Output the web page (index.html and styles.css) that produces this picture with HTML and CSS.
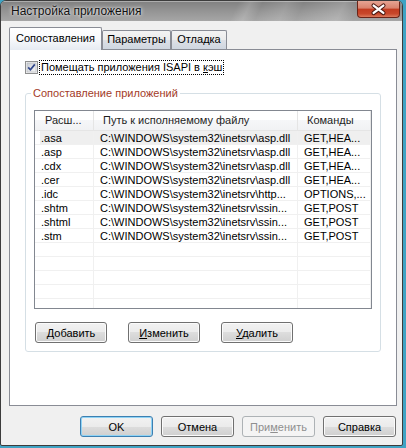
FILE: index.html
```html
<!DOCTYPE html>
<html lang="ru">
<head>
    <meta charset="UTF-8">
    <title>Настройка приложения</title>
    <link rel="stylesheet" href="styles.css">
</head>
<body>
    <div class="window">
        <!-- Заголовок окна -->
        <div class="titlebar">
            <span class="caption">Настройка приложения</span>
            <button class="close-btn" type="button" aria-label="Закрыть">
                <svg width="42" height="17" viewBox="0 0 42 17">
                    <path d="M16 4.5 L26 12 M26 4.5 L16 12" stroke="#4a1810" stroke-width="4.4" stroke-linecap="round" fill="none"/>
                    <path d="M16 4.5 L26 12 M26 4.5 L16 12" stroke="#fff" stroke-width="2.4" stroke-linecap="round" fill="none"/>
                </svg>
            </button>
        </div>

        <div class="client">
            <!-- Вкладки -->
            <div class="tabs">
                <div class="tab active">Сопоставления</div>
                <div class="tab tab-params">Параметры</div>
                <div class="tab tab-debug">Отладка</div>
            </div>

            <div class="tab-page">
                <label class="check-row">
                    <span class="checkbox">
                        <svg width="13" height="13" viewBox="0 0 13 13">
                            <defs>
                                <linearGradient id="boxFill" x1="0" y1="0" x2="1" y2="1">
                                    <stop offset="0" stop-color="#c9cdd3"/>
                                    <stop offset="1" stop-color="#f7f7f7"/>
                                </linearGradient>
                            </defs>
                            <rect x="0.5" y="0.5" width="12" height="12" fill="#f4f4f4" stroke="#8e8f8f"/>
                            <rect x="2" y="2" width="9" height="9" fill="url(#boxFill)" stroke="#aeb2b8" stroke-width="0.6"/>
                            <path d="M3.2 6.4 L5.4 8.8 L9.8 3.4" stroke="#31478b" stroke-width="1.7" fill="none"/>
                        </svg>
                    </span>
                    <span class="check-label">Помещать приложения ISAPI в <u>к</u>эш</span>
                </label>

                <fieldset class="group">
                    <legend>Сопоставление приложений</legend>

                    <div class="listview">
                        <div class="lv-header">
                            <span>Расш...</span>
                            <span>Путь к исполняемому файлу</span>
                            <span>Команды</span>
                        </div>
                        <div class="lv-row focused">
                            <span>.asa</span><span>C:\WINDOWS\system32\inetsrv\asp.dll</span><span>GET,HEA...</span>
                        </div>
                        <div class="lv-row">
                            <span>.asp</span><span>C:\WINDOWS\system32\inetsrv\asp.dll</span><span>GET,HEA...</span>
                        </div>
                        <div class="lv-row">
                            <span>.cdx</span><span>C:\WINDOWS\system32\inetsrv\asp.dll</span><span>GET,HEA...</span>
                        </div>
                        <div class="lv-row">
                            <span>.cer</span><span>C:\WINDOWS\system32\inetsrv\asp.dll</span><span>GET,HEA...</span>
                        </div>
                        <div class="lv-row">
                            <span>.idc</span><span>C:\WINDOWS\system32\inetsrv\http...</span><span>OPTIONS,...</span>
                        </div>
                        <div class="lv-row">
                            <span>.shtm</span><span>C:\WINDOWS\system32\inetsrv\ssin...</span><span>GET,POST</span>
                        </div>
                        <div class="lv-row">
                            <span>.shtml</span><span>C:\WINDOWS\system32\inetsrv\ssin...</span><span>GET,POST</span>
                        </div>
                        <div class="lv-row">
                            <span>.stm</span><span>C:\WINDOWS\system32\inetsrv\ssin...</span><span>GET,POST</span>
                        </div>
                        <!-- пустые строки с линиями сетки -->
                        <div class="lv-row"><span></span><span></span><span></span></div>
                        <div class="lv-row"><span></span><span></span><span></span></div>
                        <div class="lv-row"><span></span><span></span><span></span></div>
                        <div class="lv-row"><span></span><span></span><span></span></div>
                        <div class="lv-row"><span></span><span></span><span></span></div>
                    </div>

                    <div class="group-buttons">
                        <button class="btn" type="button"><u>Д</u>обавить</button>
                        <button class="btn" type="button"><u>И</u>зменить</button>
                        <button class="btn" type="button"><u>У</u>далить</button>
                    </div>
                </fieldset>
            </div>

            <!-- Кнопки диалога -->
            <div class="dialog-buttons">
                <button class="btn wide default" type="button">OK</button>
                <button class="btn wide" type="button">Отмена</button>
                <button class="btn wide" type="button" disabled>При<u>м</u>енить</button>
                <button class="btn wide" type="button">Справка</button>
            </div>
        </div>
    </div>
</body>
</html>
```

FILE: styles.css
```css
/* Общие стили */
* {
    box-sizing: border-box;
}

body {
    margin: 0;
    background-color: #3fa3c4;
    font-family: "Liberation Sans", Arial, sans-serif;
    font-size: 11px;
    color: #000;
}

/* Окно диалога */
.window {
    width: 403px;
    height: 446px;
    display: flex;
    flex-direction: column;
    border: 1px solid #3c3c3c;
    border-radius: 6px 6px 2px 2px;
    background-color: #f0f0f0;
    overflow: hidden;
}

/* Стеклянный заголовок */
.titlebar {
    height: 20px;
    display: flex;
    align-items: flex-start;
    background:
        linear-gradient(115deg, transparent 58%, rgba(255, 255, 255, 0.16) 61%, transparent 64%,
            rgba(255, 255, 255, 0.12) 70%, transparent 74%, rgba(255, 255, 255, 0.18) 84%, transparent 88%),
        linear-gradient(#808080, #969696 55%, #a6a6a6);
    box-shadow: inset 0 1px 0 rgba(255, 255, 255, 0.35);
}

.caption {
    padding: 3px 0 0 10px;
    font-size: 12px;
    line-height: 15px;
    color: #111;
    text-shadow: 0 0 4px rgba(255, 255, 255, 0.9), 0 0 2px rgba(255, 255, 255, 0.7);
}

.close-btn {
    margin-left: auto;
    margin-right: 2px;
    width: 43px;
    height: 17px;
    padding: 0;
    border: 1px solid #6b2418;
    border-top: none;
    border-radius: 0 0 4px 4px;
    background: linear-gradient(#e6a493, #d9826c 45%, #c23c20 50%, #c8482b 80%, #dc7a5c);
    display: flex;
}

.close-btn svg {
    display: block;
}

/* Клиентская область */
.client {
    flex: 1;
    display: flex;
    flex-direction: column;
    padding: 6px 5px 8px 8px;
}

/* Вкладки */
.tabs {
    height: 22px;
    display: flex;
    align-items: flex-end;
    position: relative;
    z-index: 1;
}

.tab {
    height: 19px;
    text-align: center;
    line-height: 17px;
    border: 1px solid #898c95;
    border-bottom: none;
    border-radius: 2px 2px 0 0;
    background: linear-gradient(#f3f3f3, #ebebeb 50%, #dde0e6 50%, #cfd6e0);
}

.tab.active {
    width: 93px;
    height: 23px;
    margin-bottom: -1px;
    line-height: 20px;
    background: linear-gradient(#ffffff, #f9fafc 45%, #e6ebf2);
}

.tab-params {
    width: 69px;
}

.tab-debug {
    width: 56px;
}

/* Страница вкладки */
.tab-page {
    flex: 1;
    width: 388px;
    border: 1px solid #898c95;
    background-color: #fff;
    padding: 10px 15px 0 15px;
}

/* Флажок */
.check-row {
    display: flex;
    align-items: center;
    height: 15px;
}

.checkbox {
    width: 13px;
    height: 13px;
    display: block;
}

.checkbox svg {
    display: block;
}

.check-label {
    margin-left: 1px;
    padding: 0 1px;
    line-height: 13px;
    border: 1px dotted #000;
}

/* Группа */
.group {
    margin: 12px 0 0 0;
    padding: 0 8px 8px 8px;
    border: 1px solid #d5dfe5;
    border-radius: 3px;
}

.group legend {
    margin-left: -3px;
    padding: 0 2px;
    line-height: 13px;
    color: #a33b28;
}

/* Список сопоставлений */
.listview {
    margin-top: 10px;
    height: 199px;
    border: 1px solid #828790;
    background-color: #fff;
    overflow: hidden;
}

.lv-header,
.lv-row {
    display: grid;
    grid-template-columns: 59px 204px 1fr;
}

.lv-header {
    height: 20px;
    background: linear-gradient(#ffffff, #ffffff 45%, #f6f7f9 45%, #f1f2f4);
    border-bottom: 1px solid #e5e5e5;
}

.lv-header span {
    padding-left: 9px;
    line-height: 19px;
    color: #1e1e1e;
    border-right: 1px solid #e5e5e5;
}

.lv-header span:first-child {
    padding-left: 10px;
}

.lv-row {
    height: 14px;
}

.lv-row span {
    padding-left: 6px;
    line-height: 14px;
    white-space: nowrap;
    overflow: hidden;
    border-right: 1px solid #f0f0f0;
    border-bottom: 1px solid #f0f0f0;
}

.lv-row.focused {
    background: linear-gradient(to right, transparent 5px, #efefef 5px);
}

/* Кнопки */
.btn {
    height: 21px;
    padding: 0;
    font-family: inherit;
    font-size: 11px;
    color: #000;
    border: 1px solid #707070;
    border-radius: 3px;
    background: linear-gradient(#f2f2f2, #ebebeb 50%, #dddddd 50%, #cfcfcf);
    box-shadow: inset 0 0 0 1px #fbfbfb;
}

.btn:disabled {
    color: #8f8f8f;
    border-color: #adb2b5;
    background: #f4f4f4;
    box-shadow: none;
}

.btn.default {
    border-color: #3c7fb1;
    box-shadow: inset 0 0 0 1px #8fd3f5;
}

.group-buttons {
    margin: 13px 0 0 1px;
    display: flex;
    gap: 21px;
}

.group-buttons .btn {
    width: 72px;
}

.dialog-buttons {
    margin: 10px 1px 0 0;
    display: flex;
    justify-content: flex-end;
    gap: 8px;
}

.btn.wide {
    width: 73px;
}
```
